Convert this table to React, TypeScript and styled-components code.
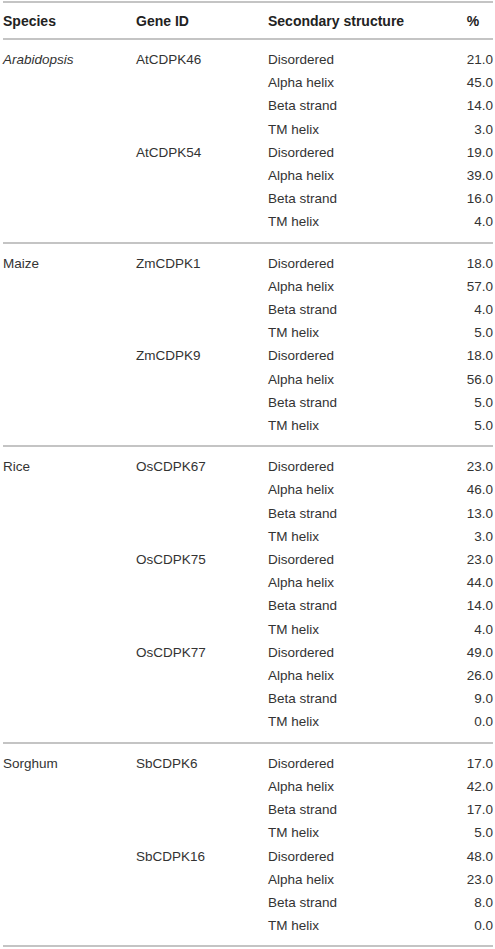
import styled, { createGlobalStyle } from "styled-components";

const GlobalStyle = createGlobalStyle`
  html, body {
    margin: 0;
    padding: 0;
    background: #ffffff;
  }
  body {
    font-family: "Liberation Sans", Arial, sans-serif;
    color: #333333;
  }
`;

const Wrapper = styled.div`
  padding: 1px 2px 0 3px;
`;

const Table = styled.table`
  width: 490px;
  border-collapse: collapse;
  table-layout: fixed;
  font-size: 13.5px;
`;

const HeadRow = styled.tr`
  border-top: 2px solid #c4c4c4;
  border-bottom: 2px solid #c4c4c4;
`;

const HeadCell = styled.th<{ center?: boolean }>`
  height: 35px;
  padding: 0;
  font-size: 14px;
  text-align: ${(p) => (p.center ? "center" : "left")};
  font-weight: 700;
  color: #222222;
  vertical-align: middle;
`;

const Group = styled.tbody`
  border-bottom: 2px solid #c4c4c4;

  tr:first-child td {
    padding-top: 8px;
  }
  tr:last-child td {
    padding-bottom: 8px;
  }
`;

const Cell = styled.td<{ right?: boolean; italic?: boolean }>`
  height: 23.2px;
  line-height: 23.2px;
  padding: 0;
  text-align: ${(p) => (p.right ? "right" : "left")};
  font-style: ${(p) => (p.italic ? "italic" : "normal")};
  vertical-align: middle;
  white-space: nowrap;
`;

interface Gene {
  id: string;
  values: number[];
}

interface Species {
  name: string;
  italic?: boolean;
  genes: Gene[];
}

const structures = ["Disordered", "Alpha helix", "Beta strand", "TM helix"];

const data: Species[] = [
  {
    name: "Arabidopsis",
    italic: true,
    genes: [
      { id: "AtCDPK46", values: [21, 45, 14, 3] },
      { id: "AtCDPK54", values: [19, 39, 16, 4] },
    ],
  },
  {
    name: "Maize",
    genes: [
      { id: "ZmCDPK1", values: [18, 57, 4, 5] },
      { id: "ZmCDPK9", values: [18, 56, 5, 5] },
    ],
  },
  {
    name: "Rice",
    genes: [
      { id: "OsCDPK67", values: [23, 46, 13, 3] },
      { id: "OsCDPK75", values: [23, 44, 14, 4] },
      { id: "OsCDPK77", values: [49, 26, 9, 0] },
    ],
  },
  {
    name: "Sorghum",
    genes: [
      { id: "SbCDPK6", values: [17, 42, 17, 5] },
      { id: "SbCDPK16", values: [48, 23, 8, 0] },
    ],
  },
];

function App() {
  return (
    <Wrapper>
      <GlobalStyle />
      <Table>
        <colgroup>
          <col style={{ width: 133 }} />
          <col style={{ width: 132 }} />
          <col />
          <col style={{ width: 40 }} />
        </colgroup>
        <thead>
          <HeadRow>
            <HeadCell>Species</HeadCell>
            <HeadCell>Gene ID</HeadCell>
            <HeadCell>Secondary structure</HeadCell>
            <HeadCell center>%</HeadCell>
          </HeadRow>
        </thead>
        {data.map((sp) => (
          <Group key={sp.name}>
            {sp.genes.map((gene, gi) =>
              structures.map((s, si) => (
                <tr key={gene.id + s}>
                  <Cell italic={sp.italic}>
                    {gi === 0 && si === 0 ? sp.name : ""}
                  </Cell>
                  <Cell>{si === 0 ? gene.id : ""}</Cell>
                  <Cell>{s}</Cell>
                  <Cell right>{gene.values[si].toFixed(1)}</Cell>
                </tr>
              ))
            )}
          </Group>
        ))}
      </Table>
    </Wrapper>
  );
}

export default App;
